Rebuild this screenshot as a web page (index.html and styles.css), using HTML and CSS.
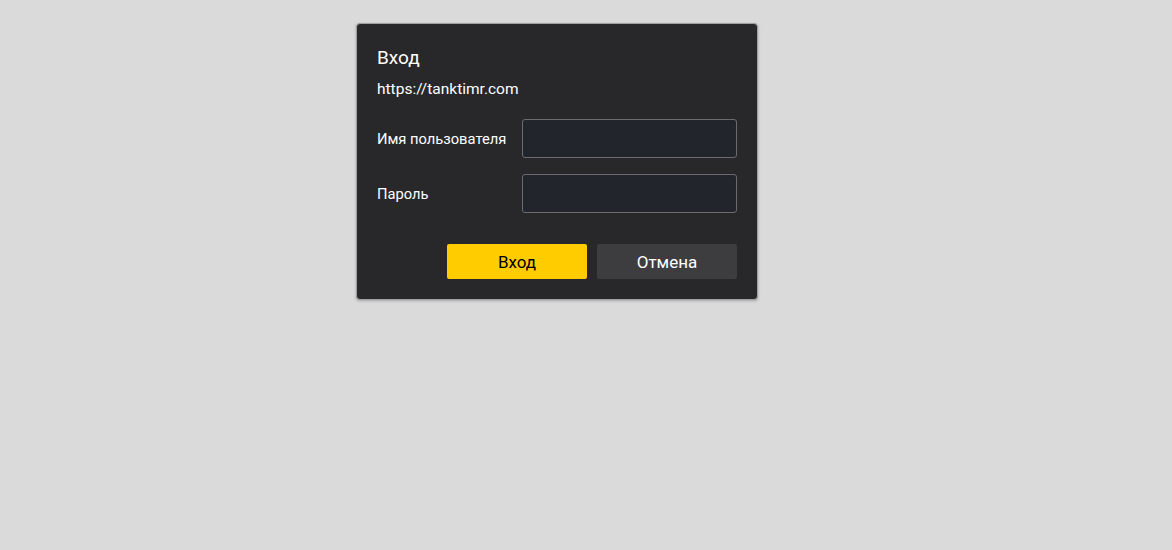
FILE: index.html
```html
<!DOCTYPE html>
<html lang="ru">

<head>
    <meta charset="UTF-8" />
    <meta name="viewport" content="width=device-width, initial-scale=1.0" />
    <title>Вход</title>
    <link rel="stylesheet" href="styles.css">
</head>

<body>
    <form class="auth" onsubmit="return false">
        <h1 class="auth-title">Вход</h1>
        <p class="auth-origin">https://tanktimr.com</p>

        <div class="auth-fields">
            <label class="auth-row">
                <span class="auth-label">Имя пользователя</span>
                <input class="auth-input" type="text" autocomplete="username" />
            </label>
            <label class="auth-row">
                <span class="auth-label">Пароль</span>
                <input class="auth-input" type="password" autocomplete="current-password" />
            </label>
        </div>

        <div class="auth-actions">
            <button class="btn btn-primary" type="submit">Вход</button>
            <button class="btn btn-secondary" type="button">Отмена</button>
        </div>
    </form>
</body>

</html>
```

FILE: styles.css
```css
:root {
    --page-bg: #dadada;
    --dialog-bg: #28282a;
    --field-bg: #23252d;
    --field-border: #6b6b6e;
    --txt: #ffffff;
    --accent: #ffcc00;
    --secondary: #3d3d3f;
}

* {
    box-sizing: border-box;
    margin: 0;
    padding: 0;
}

body {
    font-family: Roboto, "Noto Sans", sans-serif;
    background: var(--page-bg);
    min-height: 100vh;
    display: flex;
    justify-content: center;
    align-items: flex-start;
    padding-top: 23px;
    color: var(--txt);
}

/* dialog sits a bit left of centre, like the browser's own prompt */
.auth {
    width: 402px;
    margin-right: 58px;
    background: var(--dialog-bg);
    border: 1px solid #a0a0a0;
    border-radius: 4px;
    box-shadow: 0 1px 3px rgba(0, 0, 0, 0.25);
    padding: 22px 20px 20px;
}

.auth-title {
    font-size: 19px;
    font-weight: 400;
    line-height: 24px;
}

.auth-origin {
    margin-top: 10px;
    font-size: 15.5px;
    line-height: 18px;
}

.auth-fields {
    display: grid;
    gap: 16px;
    margin-top: 21px;
}

.auth-row {
    display: flex;
    align-items: center;
    justify-content: space-between;
}

.auth-label {
    font-size: 14.7px;
}

.auth-input {
    width: 215px;
    height: 39px;
    background: var(--field-bg);
    border: 1px solid var(--field-border);
    border-radius: 3px;
    color: var(--txt);
    font: inherit;
    padding: 0 8px;
    outline: none;
}

.auth-actions {
    display: flex;
    justify-content: flex-end;
    gap: 10px;
    margin-top: 31px;
}

.btn {
    width: 140px;
    height: 35px;
    border: none;
    border-radius: 2px;
    font-family: inherit;
    font-size: 17px;
    cursor: pointer;
}

.btn-primary {
    background: var(--accent);
    color: #000;
}

.btn-secondary {
    background: var(--secondary);
    color: var(--txt);
}
```
